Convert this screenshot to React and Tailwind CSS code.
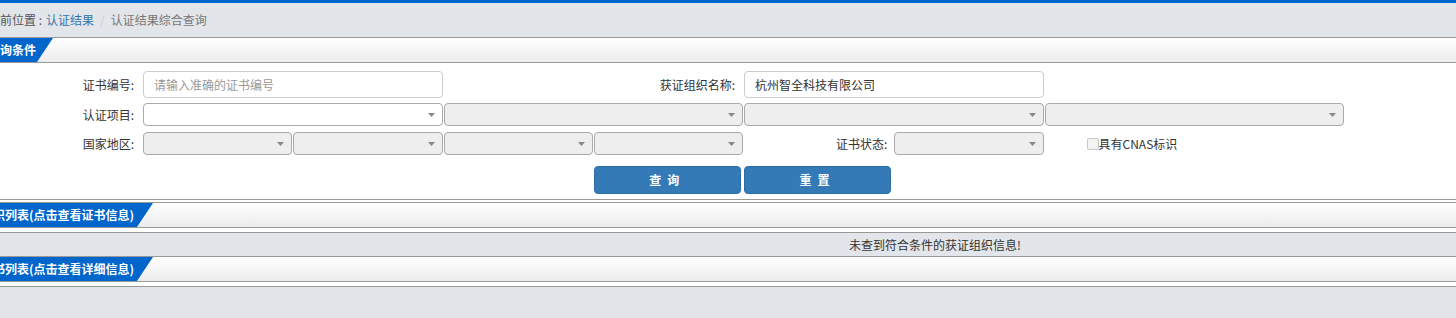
import React from 'react';

const FONT = "font-['Microsoft_YaHei','Noto_Sans_CJK_SC',sans-serif]";

const Caret = () => (
  <svg width="7" height="4" viewBox="0 0 7 4" className="shrink-0">
    <path d="M0 0 H7 L3.5 4 Z" fill="#888" />
  </svg>
);

const SelectBox = ({ disabled = true, className = '' }) => (
  <div
    className={`h-[23px] w-[calc(100%-1px)] flex items-center justify-end pr-[7px] rounded-[4px] border ${
      disabled ? 'bg-[#eeeeee] border-[#aaaaaa]' : 'bg-white border-[#aaaaaa]'
    } ${className}`}
  >
    <Caret />
  </div>
);

const SectionHeader = ({ label, tabWidth, textOffset }) => (
  <div className="h-[26px] border-y border-[#999999] bg-gradient-to-b from-white to-[#ececec] flex">
    <div
      className="h-full bg-[#0066cc] overflow-hidden flex items-center [clip-path:polygon(0_0,100%_0,calc(100%-16px)_100%,0_100%)]"
      style={{ width: tabWidth }}
    >
      <span
        className="text-white text-[12px] font-bold whitespace-nowrap"
        style={{ marginLeft: textOffset }}
      >
        {label}
      </span>
    </div>
  </div>
);

export default function App() {
  return (
    <div className={`${FONT} text-[12px] text-[#333] overflow-hidden w-[1456px] min-h-[318px] bg-white`}>
      <div className="h-[3px] bg-[#0066cc]" />

      {/* breadcrumb */}
      <div className="h-[34px] bg-[#e2e6ea] flex items-center pb-[1px]">
        <div className="-ml-[12px] flex items-center whitespace-nowrap">
          <span className="text-[#555]">当前位置 :</span>
          <span className="ml-[4px] text-[#3a75a8]">认证结果</span>
          <span className="px-[6px] text-[#ccc]">/</span>
          <span className="text-[#777]">认证结果综合查询</span>
        </div>
      </div>

      {/* query conditions */}
      <SectionHeader label="查询条件" tabWidth={53} textOffset={-12} />
      <div className="bg-white border-b border-[#999999] pt-[8px] pb-[5px]">
        <div className="grid grid-cols-[143px_repeat(8,150.25px)] items-center h-[27px]">
          <div className="text-right pr-[9px]">证书编号:</div>
          <div className="col-span-2">
            <div className="h-[27px] w-[300px] rounded-[4px] border border-[#cccccc] flex items-center pl-[10px] text-[#999]">
              请输入准确的证书编号
            </div>
          </div>
          <div className="col-span-2 text-right pr-[9px]">获证组织名称:</div>
          <div className="col-span-2">
            <div className="h-[27px] w-[300px] rounded-[4px] border border-[#cccccc] flex items-center pl-[10px] text-[#333]">
              杭州智全科技有限公司
            </div>
          </div>
        </div>

        <div className="grid grid-cols-[143px_repeat(8,150.25px)] items-center h-[23px] mt-[5px]">
          <div className="text-right pr-[9px]">认证项目:</div>
          <div className="col-span-2"><SelectBox disabled={false} /></div>
          <div className="col-span-2"><SelectBox /></div>
          <div className="col-span-2"><SelectBox /></div>
          <div className="col-span-2"><SelectBox /></div>
        </div>

        <div className="grid grid-cols-[143px_repeat(8,150.25px)] items-center h-[23px] mt-[6px]">
          <div className="text-right pr-[9px]">国家地区:</div>
          <div><SelectBox /></div>
          <div><SelectBox /></div>
          <div><SelectBox /></div>
          <div><SelectBox /></div>
          <div className="text-right pr-[7px]">证书状态:</div>
          <div><SelectBox /></div>
          <div className="col-span-2 pl-[42px] flex items-center">
            <span className="w-[12px] h-[12px] border border-[#c8c8c8] bg-[#f4f4f4] rounded-[2px] inline-block" />
            <span className="text-[#333]">具有CNAS标识</span>
          </div>
        </div>

        <div className="grid grid-cols-[143px_repeat(8,150.25px)] items-center h-[28px] mt-[11px]">
          <button className="col-start-5 h-[28px] w-[147px] rounded-[4px] bg-[#337ab7] border border-[#2e6da4] text-white font-bold tracking-[6px] text-[12px]">
            查询
          </button>
          <button className="col-start-6 h-[28px] w-[147px] rounded-[4px] bg-[#337ab7] border border-[#2e6da4] text-white font-bold tracking-[6px] text-[12px]">
            重置
          </button>
        </div>
      </div>

      <div className="h-[2px] bg-white" />

      {/* organisation list */}
      <SectionHeader label="获证组织列表(点击查看证书信息)" tabWidth={153} textOffset={-43} />
      <div className="h-[4px] bg-white" />
      <div className="h-[24px] bg-[#e2e6ea] border-t border-[#999999] flex items-center pl-[849px] whitespace-nowrap">
        未查到符合条件的获证组织信息!
      </div>

      {/* certificate list */}
      <SectionHeader label="认证证书列表(点击查看详细信息)" tabWidth={153} textOffset={-43} />
      <div className="h-[4px] bg-white" />
      <div className="h-[40px] bg-[#e2e6ea] border-t border-[#999999]" />
    </div>
  );
}
